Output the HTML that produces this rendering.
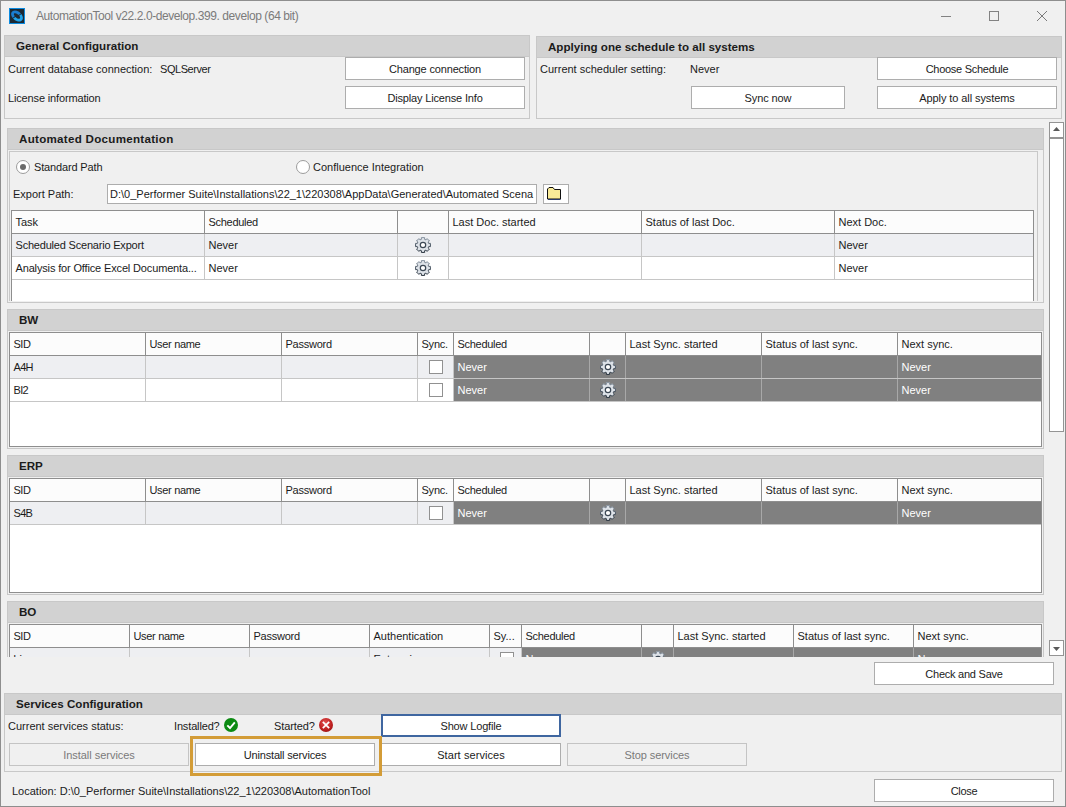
<!DOCTYPE html>
<html><head><meta charset="utf-8"><title>AutomationTool</title>
<style>
html,body{margin:0;padding:0;}
body{width:1066px;height:807px;overflow:hidden;background:#f0f0f0;font-family:"Liberation Sans",sans-serif;font-size:11px;color:#1b1b1b;}
#win{position:absolute;left:0;top:0;width:1066px;height:807px;background:#f0f0f0;overflow:hidden;}
.a{position:absolute;box-sizing:border-box;}
.t{position:absolute;white-space:nowrap;line-height:14px;height:14px;}
.grp{position:absolute;box-sizing:border-box;border:1px solid #c8c8c8;background:#f0f0f0;}
.hd{position:absolute;left:0;right:0;top:0;height:20px;background:#d2d2d2;border-bottom:1px solid #c8c8c8;}
.hd span{position:absolute;left:11px;top:3px;font-weight:bold;font-size:11.6px;line-height:14px;white-space:nowrap;color:#1b1b1b;}
.btn{position:absolute;box-sizing:border-box;border:1px solid #adadad;background:#fff;text-align:center;line-height:21px;white-space:nowrap;padding-top:1px;letter-spacing:-0.18px;}
.btn.dis{background:#f0f0f0;border-color:#c4c4c4;color:#7a7a7a;}
.tbl{position:absolute;box-sizing:border-box;background:#fff;border:1px solid #8e8e8e;overflow:hidden;}
.row{position:absolute;left:0;right:0;height:23px;box-sizing:border-box;border-bottom:1px solid #c6c6c6;}
.row.h{background:#fcfcfc;border-bottom:1px solid #8e8e8e;}
.row.alt{background:#eeeff2;}
.c{position:absolute;top:0;height:22px;box-sizing:border-box;border-right:1px solid #c6c6c6;line-height:22px;padding-left:3.5px;white-space:nowrap;overflow:hidden;}
.row.h .c{border-right:1px solid #8e8e8e;}
.c.last,.row.h .c.last{border-right:none;}
.c.d{background:#808080;color:#fff;border-right-color:#a8a8a8;}
.chk{position:absolute;width:14px;height:14px;box-sizing:border-box;border:1px solid #919191;background:#fff;top:4px;}
.gear{position:absolute;top:3px;width:16px;height:16px;}
</style></head><body>
<div id="win">
<svg width="0" height="0" style="position:absolute"><defs><linearGradient id="gs" x1="0" y1="0" x2="0" y2="1"><stop offset="0" stop-color="#8995a2"/><stop offset="0.55" stop-color="#46525f"/><stop offset="1" stop-color="#26313c"/></linearGradient></defs></svg>
<svg class="a" style="left:9px;top:8px" width="16" height="16" viewBox="0 0 16 16"><rect width="16" height="16" fill="#1c2934"/><rect x=".5" y=".5" width="15" height="15" fill="none" stroke="#0b8be0" stroke-width="1"/><g transform="rotate(40 8 8)"><path d="M9.40 3.50A6.7 4.6 0 0 0 6.00 12.39L6.40 9.53A3.7 1.7 0 0 1 8.60 6.32z" fill="#1a7dd0"/><path d="M9.40 3.50A6.7 4.6 0 0 0 6.00 12.39L6.40 9.53A3.7 1.7 0 0 1 8.60 6.32z" fill="#1fa4ec" transform="rotate(180 8 8)"/></g></svg>
<div class="t" style="left:36px;top:9px;font-size:12px;letter-spacing:-0.42px;color:#7b7b7b;">AutomationTool v22.2.0-develop.399. develop (64 bit)</div>
<div class="a" style="left:941px;top:16px;width:10px;height:1px;background:#828282"></div>
<div class="a" style="left:989px;top:11px;width:10px;height:10px;border:1px solid #828282"></div>
<svg class="a" style="left:1037px;top:11px" width="10" height="10" viewBox="0 0 10 10"><path d="M0 0l10 10M10 0L0 10" stroke="#7a7a7a" stroke-width="1" fill="none"/></svg>
<div class="grp" style="left:4px;top:35px;width:526px;height:84px;"><div class="hd"><span>General Configuration</span></div></div>
<div class="t" style="left:8px;top:62px;">Current database connection:</div>
<div class="t" style="left:160px;top:62px;letter-spacing:-0.45px;">SQLServer</div>
<div class="t" style="left:8px;top:91px;letter-spacing:-0.15px;">License information</div>
<div class="btn " style="left:345px;top:57px;width:180px;height:23px;line-height:21px;letter-spacing:-0.16px;">Change connection</div>
<div class="btn " style="left:345px;top:86px;width:180px;height:23px;line-height:21px;letter-spacing:-0.16px;">Display License Info</div>
<div class="grp" style="left:536px;top:36px;width:526px;height:83px;"><div class="hd"><span>Applying one schedule to all systems</span></div></div>
<div class="t" style="left:540px;top:62px;">Current scheduler setting:</div>
<div class="t" style="left:690px;top:62px;">Never</div>
<div class="btn " style="left:877px;top:57px;width:180px;height:23px;line-height:21px;letter-spacing:-0.28px;">Choose Schedule</div>
<div class="btn " style="left:691px;top:86px;width:154px;height:23px;line-height:21px;letter-spacing:-0.11px;">Sync now</div>
<div class="btn " style="left:877px;top:86px;width:180px;height:23px;line-height:21px;letter-spacing:-0.09px;">Apply to all systems</div>
<div class="a" style="left:0;top:0;width:1048px;height:657px;overflow:hidden;">
<div class="grp" style="left:7px;top:128px;width:1037px;height:175px;"><div class="hd"><span style="letter-spacing:0.28px">Automated Documentation</span></div></div>
<div class="a" style="left:9px;top:151px;width:1029px;height:150px;border:1px solid #c8c8c8;border-bottom:none;"></div>
<div class="a" style="left:16px;top:160px;width:14px;height:14px;border:1px solid #9c9c9c;border-radius:7px;background:#fff;"></div><div class="a" style="left:20px;top:164px;width:6px;height:6px;border-radius:3px;background:#6a6a6a;"></div>
<div class="t" style="left:34px;top:160px;letter-spacing:-0.15px;">Standard Path</div>
<div class="a" style="left:296px;top:160px;width:14px;height:14px;border:1px solid #9c9c9c;border-radius:7px;background:#fff;"></div>
<div class="t" style="left:313px;top:160px;">Confluence Integration</div>
<div class="t" style="left:13px;top:187px;">Export Path:</div>
<div class="a" style="left:107px;top:184px;width:430px;height:20px;border:1px solid #adadad;background:#fff;overflow:hidden;"><div class="t" style="left:2px;top:2px;">D:\0_Performer Suite\Installations\22_1\220308\AppData\Generated\Automated Scena</div></div>
<div class="a" style="left:543px;top:184px;width:26px;height:20px;border:1px solid #adadad;background:#fff;"></div>
<svg class="a" style="left:547px;top:187px" width="14" height="13" viewBox="0 0 14 13"><path d="M.5 2L2 .5h4L7.500 2.500h6v9.500H.5z" fill="#f9eb98" stroke="#111" stroke-width="1" stroke-linejoin="round"/><path d="M1 12.500h12.500" stroke="#2a3a6a" stroke-width="1"/></svg>
<div class="tbl" style="left:11px;top:210px;width:1023px;height:91px;border-bottom:none;">
<div class="row h" style="top:0px;"><div class="c" style="left:0px;width:193px;">Task</div><div class="c" style="left:193px;width:193px;"><span style="letter-spacing:-0.29px">Scheduled</span></div><div class="c" style="left:386px;width:51px;"></div><div class="c" style="left:437px;width:193px;">Last Doc. started</div><div class="c" style="left:630px;width:193px;">Status of last Doc.</div><div class="c last" style="left:823px;width:198px;">Next Doc.</div></div>
<div class="row alt" style="top:23px;"><div class="c" style="left:0px;width:193px;"><span style="letter-spacing:-0.2px">Scheduled Scenario Export</span></div><div class="c" style="left:193px;width:193px;">Never</div><div class="c" style="left:386px;width:51px;"><svg class="gear" style="left:17px" viewBox="0 0 16 16"><path d="M6.43 2.31L6.34 0.58L9.66 0.58L9.57 2.31L10.91 2.87L12.07 1.58L14.42 3.93L13.13 5.09L13.69 6.43L15.42 6.34L15.42 9.66L13.69 9.57L13.13 10.91L14.42 12.07L12.07 14.42L10.91 13.13L9.57 13.69L9.66 15.42L6.34 15.42L6.43 13.69L5.09 13.13L3.93 14.42L1.58 12.07L2.87 10.91L2.31 9.57L0.58 9.66L0.58 6.34L2.31 6.43L2.87 5.09L1.58 3.93L3.93 1.58L5.09 2.87Z" fill="#dde2e8" stroke="url(#gs)" stroke-width="1" stroke-linejoin="round"/><circle cx="8" cy="8" r="2.700" fill="#fff" stroke="#3c4855" stroke-width="1.2"/></svg></div><div class="c" style="left:437px;width:193px;"></div><div class="c" style="left:630px;width:193px;"></div><div class="c last" style="left:823px;width:198px;">Never</div></div>
<div class="row" style="top:46px;"><div class="c" style="left:0px;width:193px;"><span style="letter-spacing:-0.15px">Analysis for Office Excel Documenta...</span></div><div class="c" style="left:193px;width:193px;">Never</div><div class="c" style="left:386px;width:51px;"><svg class="gear" style="left:17px" viewBox="0 0 16 16"><path d="M6.43 2.31L6.34 0.58L9.66 0.58L9.57 2.31L10.91 2.87L12.07 1.58L14.42 3.93L13.13 5.09L13.69 6.43L15.42 6.34L15.42 9.66L13.69 9.57L13.13 10.91L14.42 12.07L12.07 14.42L10.91 13.13L9.57 13.69L9.66 15.42L6.34 15.42L6.43 13.69L5.09 13.13L3.93 14.42L1.58 12.07L2.87 10.91L2.31 9.57L0.58 9.66L0.58 6.34L2.31 6.43L2.87 5.09L1.58 3.93L3.93 1.58L5.09 2.87Z" fill="#dde2e8" stroke="url(#gs)" stroke-width="1" stroke-linejoin="round"/><circle cx="8" cy="8" r="2.700" fill="#fff" stroke="#3c4855" stroke-width="1.2"/></svg></div><div class="c" style="left:437px;width:193px;"></div><div class="c" style="left:630px;width:193px;"></div><div class="c last" style="left:823px;width:198px;">Never</div></div>
</div>
<div class="grp" style="left:7px;top:309px;width:1037px;height:140px;"><div class="hd"><span>BW</span></div></div>
<div class="tbl" style="left:9px;top:332px;width:1033px;height:115px;">
<div class="row h" style="top:0px;"><div class="c" style="left:0px;width:136px;"><span style="letter-spacing:-0.5px">SID</span></div><div class="c" style="left:136px;width:136px;"><span style="letter-spacing:-0.33px">User name</span></div><div class="c" style="left:272px;width:136px;"><span style="letter-spacing:-0.25px">Password</span></div><div class="c" style="left:408px;width:36px;"><span style="letter-spacing:-0.22px">Sync.</span></div><div class="c" style="left:444px;width:136px;"><span style="letter-spacing:-0.29px">Scheduled</span></div><div class="c" style="left:580px;width:36px;"></div><div class="c" style="left:616px;width:136px;">Last Sync. started</div><div class="c" style="left:752px;width:136px;">Status of last sync.</div><div class="c last" style="left:888px;width:143px;">Next sync.</div></div>
<div class="row alt" style="top:23px;"><div class="c" style="left:0px;width:136px;"><span style="letter-spacing:-0.7px">A4H</span></div><div class="c" style="left:136px;width:136px;"></div><div class="c" style="left:272px;width:136px;"></div><div class="c" style="left:408px;width:36px;"><div class="chk" style="left:11px"></div></div><div class="c d" style="left:444px;width:136px;">Never</div><div class="c d" style="left:580px;width:36px;"><svg class="gear" style="left:10px" viewBox="0 0 16 16"><path d="M6.43 2.31L6.34 0.58L9.66 0.58L9.57 2.31L10.91 2.87L12.07 1.58L14.42 3.93L13.13 5.09L13.69 6.43L15.42 6.34L15.42 9.66L13.69 9.57L13.13 10.91L14.42 12.07L12.07 14.42L10.91 13.13L9.57 13.69L9.66 15.42L6.34 15.42L6.43 13.69L5.09 13.13L3.93 14.42L1.58 12.07L2.87 10.91L2.31 9.57L0.58 9.66L0.58 6.34L2.31 6.43L2.87 5.09L1.58 3.93L3.93 1.58L5.09 2.87Z" fill="#dde2e8" stroke="url(#gs)" stroke-width="1" stroke-linejoin="round"/><circle cx="8" cy="8" r="2.700" fill="#fff" stroke="#3c4855" stroke-width="1.2"/></svg></div><div class="c d" style="left:616px;width:136px;"></div><div class="c d" style="left:752px;width:136px;"></div><div class="c last d" style="left:888px;width:143px;">Never</div></div>
<div class="row" style="top:46px;"><div class="c" style="left:0px;width:136px;"><span style="letter-spacing:-0.7px">BI2</span></div><div class="c" style="left:136px;width:136px;"></div><div class="c" style="left:272px;width:136px;"></div><div class="c" style="left:408px;width:36px;"><div class="chk" style="left:11px"></div></div><div class="c d" style="left:444px;width:136px;">Never</div><div class="c d" style="left:580px;width:36px;"><svg class="gear" style="left:10px" viewBox="0 0 16 16"><path d="M6.43 2.31L6.34 0.58L9.66 0.58L9.57 2.31L10.91 2.87L12.07 1.58L14.42 3.93L13.13 5.09L13.69 6.43L15.42 6.34L15.42 9.66L13.69 9.57L13.13 10.91L14.42 12.07L12.07 14.42L10.91 13.13L9.57 13.69L9.66 15.42L6.34 15.42L6.43 13.69L5.09 13.13L3.93 14.42L1.58 12.07L2.87 10.91L2.31 9.57L0.58 9.66L0.58 6.34L2.31 6.43L2.87 5.09L1.58 3.93L3.93 1.58L5.09 2.87Z" fill="#dde2e8" stroke="url(#gs)" stroke-width="1" stroke-linejoin="round"/><circle cx="8" cy="8" r="2.700" fill="#fff" stroke="#3c4855" stroke-width="1.2"/></svg></div><div class="c d" style="left:616px;width:136px;"></div><div class="c d" style="left:752px;width:136px;"></div><div class="c last d" style="left:888px;width:143px;">Never</div></div>
</div>
<div class="grp" style="left:7px;top:455px;width:1037px;height:140px;"><div class="hd"><span>ERP</span></div></div>
<div class="tbl" style="left:9px;top:478px;width:1033px;height:115px;">
<div class="row h" style="top:0px;"><div class="c" style="left:0px;width:136px;"><span style="letter-spacing:-0.5px">SID</span></div><div class="c" style="left:136px;width:136px;"><span style="letter-spacing:-0.33px">User name</span></div><div class="c" style="left:272px;width:136px;"><span style="letter-spacing:-0.25px">Password</span></div><div class="c" style="left:408px;width:36px;"><span style="letter-spacing:-0.22px">Sync.</span></div><div class="c" style="left:444px;width:136px;"><span style="letter-spacing:-0.29px">Scheduled</span></div><div class="c" style="left:580px;width:36px;"></div><div class="c" style="left:616px;width:136px;">Last Sync. started</div><div class="c" style="left:752px;width:136px;">Status of last sync.</div><div class="c last" style="left:888px;width:143px;">Next sync.</div></div>
<div class="row alt" style="top:23px;"><div class="c" style="left:0px;width:136px;"><span style="letter-spacing:-0.7px">S4B</span></div><div class="c" style="left:136px;width:136px;"></div><div class="c" style="left:272px;width:136px;"></div><div class="c" style="left:408px;width:36px;"><div class="chk" style="left:11px"></div></div><div class="c d" style="left:444px;width:136px;">Never</div><div class="c d" style="left:580px;width:36px;"><svg class="gear" style="left:10px" viewBox="0 0 16 16"><path d="M6.43 2.31L6.34 0.58L9.66 0.58L9.57 2.31L10.91 2.87L12.07 1.58L14.42 3.93L13.13 5.09L13.69 6.43L15.42 6.34L15.42 9.66L13.69 9.57L13.13 10.91L14.42 12.07L12.07 14.42L10.91 13.13L9.57 13.69L9.66 15.42L6.34 15.42L6.43 13.69L5.09 13.13L3.93 14.42L1.58 12.07L2.87 10.91L2.31 9.57L0.58 9.66L0.58 6.34L2.31 6.43L2.87 5.09L1.58 3.93L3.93 1.58L5.09 2.87Z" fill="#dde2e8" stroke="url(#gs)" stroke-width="1" stroke-linejoin="round"/><circle cx="8" cy="8" r="2.700" fill="#fff" stroke="#3c4855" stroke-width="1.2"/></svg></div><div class="c d" style="left:616px;width:136px;"></div><div class="c d" style="left:752px;width:136px;"></div><div class="c last d" style="left:888px;width:143px;">Never</div></div>
</div>
<div class="grp" style="left:7px;top:601px;width:1037px;height:140px;"><div class="hd"><span>BO</span></div></div>
<div class="tbl" style="left:9px;top:624px;width:1033px;height:115px;">
<div class="row h" style="top:0px;"><div class="c" style="left:0px;width:120px;"><span style="letter-spacing:-0.5px">SID</span></div><div class="c" style="left:120px;width:120px;"><span style="letter-spacing:-0.33px">User name</span></div><div class="c" style="left:240px;width:120px;"><span style="letter-spacing:-0.25px">Password</span></div><div class="c" style="left:360px;width:120px;">Authentication</div><div class="c" style="left:480px;width:32px;">Sy...</div><div class="c" style="left:512px;width:120px;"><span style="letter-spacing:-0.29px">Scheduled</span></div><div class="c" style="left:632px;width:32px;"></div><div class="c" style="left:664px;width:120px;">Last Sync. started</div><div class="c" style="left:784px;width:120px;">Status of last sync.</div><div class="c last" style="left:904px;width:127px;">Next sync.</div></div>
<div class="row alt" style="top:23px;"><div class="c" style="left:0px;width:120px;">bia</div><div class="c" style="left:120px;width:120px;"></div><div class="c" style="left:240px;width:120px;"></div><div class="c" style="left:360px;width:120px;">Enterprise</div><div class="c" style="left:480px;width:32px;"><div class="chk" style="left:10px"></div></div><div class="c d" style="left:512px;width:120px;">Never</div><div class="c d" style="left:632px;width:32px;"><svg class="gear" style="left:8px" viewBox="0 0 16 16"><path d="M6.43 2.31L6.34 0.58L9.66 0.58L9.57 2.31L10.91 2.87L12.07 1.58L14.42 3.93L13.13 5.09L13.69 6.43L15.42 6.34L15.42 9.66L13.69 9.57L13.13 10.91L14.42 12.07L12.07 14.42L10.91 13.13L9.57 13.69L9.66 15.42L6.34 15.42L6.43 13.69L5.09 13.13L3.93 14.42L1.58 12.07L2.87 10.91L2.31 9.57L0.58 9.66L0.58 6.34L2.31 6.43L2.87 5.09L1.58 3.93L3.93 1.58L5.09 2.87Z" fill="#dde2e8" stroke="url(#gs)" stroke-width="1" stroke-linejoin="round"/><circle cx="8" cy="8" r="2.700" fill="#fff" stroke="#3c4855" stroke-width="1.2"/></svg></div><div class="c d" style="left:664px;width:120px;"></div><div class="c d" style="left:784px;width:120px;"></div><div class="c last d" style="left:904px;width:127px;">Never</div></div>
</div>
</div>
<div class="a" style="left:1049px;top:122px;width:15px;height:16px;border:1px solid #949494;background:#fff;"></div>
<svg class="a" style="left:1053px;top:127px" width="7" height="4" viewBox="0 0 7 4"><path d="M0 4L3.500 0L7 4z" fill="#5a5a5a"/></svg>
<div class="a" style="left:1049px;top:138px;width:15px;height:294px;border:1px solid #949494;background:#fff;"></div>
<div class="a" style="left:1049px;top:640px;width:15px;height:16px;border:1px solid #949494;background:#fff;"></div>
<svg class="a" style="left:1053px;top:647px" width="7" height="4" viewBox="0 0 7 4"><path d="M0 0L3.500 4L7 0z" fill="#5a5a5a"/></svg>
<div class="btn " style="left:874px;top:662px;width:180px;height:23px;line-height:21px;letter-spacing:-0.24px;">Check and Save</div>
<div class="grp" style="left:4px;top:693px;width:1058px;height:79px;"><div class="hd"><span>Services Configuration</span></div></div>
<div class="t" style="left:8px;top:719px;">Current services status:</div>
<div class="t" style="left:174px;top:719px;letter-spacing:-0.15px;">Installed?</div>
<svg class="a" style="left:224px;top:718px" width="14" height="14" viewBox="0 0 14 14"><circle cx="7" cy="7" r="7" fill="#0c8a12"/><path d="M3.300 7.300l2.700 2.700 4.800-5.600" fill="none" stroke="#fff" stroke-width="1.9"/></svg>
<div class="t" style="left:274px;top:719px;letter-spacing:-0.1px;">Started?</div>
<svg class="a" style="left:319px;top:718px" width="14" height="14" viewBox="0 0 14 14"><defs><radialGradient id="rg" cx="0.45" cy="0.35" r="0.7"><stop offset="0" stop-color="#e25555"/><stop offset="0.6" stop-color="#c32424"/><stop offset="1" stop-color="#9c1212"/></radialGradient></defs><circle cx="7" cy="7" r="7" fill="url(#rg)"/><path d="M3.800 3.800l6.400 6.400M10.200 3.800l-6.400 6.400" fill="none" stroke="#fff" stroke-width="1.700"/></svg>
<div class="btn " style="left:381px;top:714px;width:180px;height:23px;line-height:21px;border:2px solid #3f66a0;line-height:19px;letter-spacing:-0.16px;">Show Logfile</div>
<div class="btn dis" style="left:9px;top:743px;width:180px;height:23px;line-height:21px;letter-spacing:-0.03px;">Install services</div>
<div class="btn " style="left:195px;top:743px;width:180px;height:23px;line-height:21px;letter-spacing:-0.17px;">Uninstall services</div>
<div class="btn " style="left:381px;top:743px;width:180px;height:23px;line-height:21px;letter-spacing:0.08px;">Start services</div>
<div class="btn dis" style="left:567px;top:743px;width:180px;height:23px;line-height:21px;letter-spacing:-0.07px;">Stop services</div>
<div class="a" style="left:190px;top:736px;width:192px;height:40px;border:3px solid #d39c37;"></div>
<div class="t" style="left:12px;top:784px;">Location: D:\0_Performer Suite\Installations\22_1\220308\AutomationTool</div>
<div class="btn " style="left:874px;top:779px;width:180px;height:23px;line-height:21px;letter-spacing:-0.3px;">Close</div>
<div class="a" style="left:0;top:0;width:1066px;height:1px;background:#8e8e8e"></div>
<div class="a" style="left:0;top:806px;width:1066px;height:1px;background:#8e8e8e"></div>
<div class="a" style="left:0;top:0;width:1px;height:807px;background:#8e8e8e"></div>
<div class="a" style="left:1065px;top:0;width:1px;height:807px;background:#8e8e8e"></div>
</div>
</body></html>
